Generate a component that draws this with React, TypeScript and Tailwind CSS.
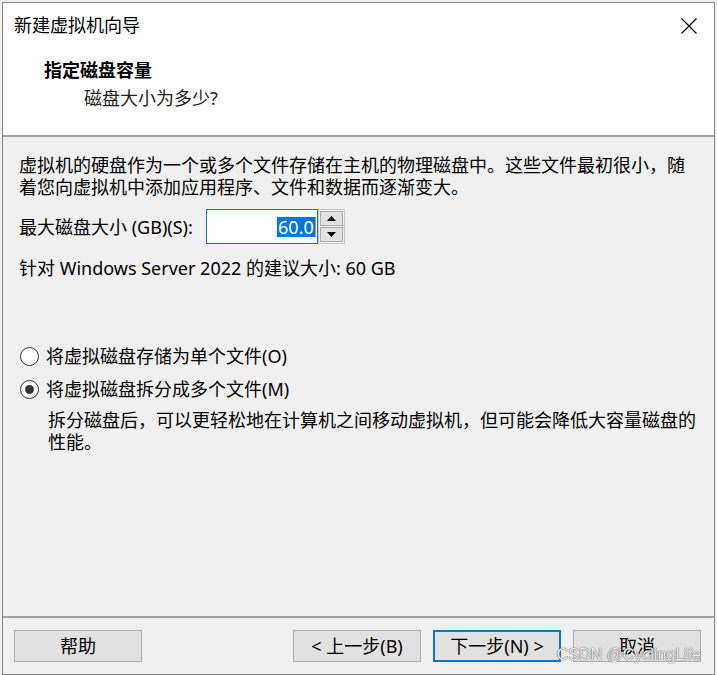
import React from 'react';

const ui = "font-['Noto_Sans','Noto_Sans_CJK_SC',sans-serif]";

function WizardButton({ label, primary }: { label: string; primary?: boolean }) {
    return (
        <button
            className={
                'w-[128px] h-[32px] bg-[#e1e1e1] text-[18px] leading-none text-black flex items-center justify-center ' +
                (primary ? 'border-2 border-[#0078d7]' : 'border border-[#adadad]')
            }
        >
            {label}
        </button>
    );
}

function Radio({ checked, label }: { checked?: boolean; label: string }) {
    return (
        <div className="flex items-center h-[22px]">
            <span className="w-[19px] h-[19px] rounded-full border border-[#333333] bg-white flex items-center justify-center ml-[17px]">
                {checked && <span className="w-[9px] h-[9px] rounded-full bg-[#333333]" />}
            </span>
            <span className="ml-[7px]">{label}</span>
        </div>
    );
}

export default function App() {
    return (
        <div className={`w-[717px] h-[675px] bg-[#f0f0f0] pt-[2px] pl-[2px] overflow-hidden ${ui} text-[18px] leading-[22px] text-black`}>
            <div className="relative w-[713px] h-[673px] border border-[#858585] flex flex-col">
                {/* Title + header */}
                <div className="bg-white h-[132px]">
                    <div className="h-[44px] flex items-center justify-between pl-[11px] pr-[17px]">
                        <span>新建虚拟机向导</span>
                        <svg width="16" height="16" viewBox="0 0 16 16" className="mt-[1px]">
                            <path d="M0.5 0.5 L15.5 15.5 M15.5 0.5 L0.5 15.5" stroke="#000" strokeWidth="1.1" fill="none" />
                        </svg>
                    </div>
                    <div className="mt-[12px] pl-[41px] font-bold">指定磁盘容量</div>
                    <div className="mt-[6px] pl-[81px] text-[#222]">磁盘大小为多少?</div>
                </div>
                <div className="h-[2px] bg-[#a0a0a0]" />

                {/* Body */}
                <div className="flex-1 pt-[17px] pl-[16px] pr-[12px]">
                    <p>
                        虚拟机的硬盘作为一个或多个文件存储在主机的物理磁盘中。这些文件最初很小，随
                        <br />
                        着您向虚拟机中添加应用程序、文件和数据而逐渐变大。
                    </p>

                    <div className="mt-[11px] flex items-center">
                        <span>最大磁盘大小 (GB)(S):</span>
                        <div className="ml-[13px] flex h-[35px]">
                            <div className="w-[112px] h-full bg-white border border-[#0078d7] flex items-center justify-end pr-[1px]">
                                <span className="bg-[#0078d7] text-white h-[20px] leading-[20px] px-[1px]">60.0</span>
                                <span className="w-[1px] h-[20px] bg-[#e58a2a]" />
                            </div>
                            <div className="w-[27px] h-full border border-[#c8c8c8] flex flex-col gap-[1px] p-[1px] bg-[#f0f0f0]">
                                <div className="flex-1 bg-[#e1e1e1] border border-[#adadad] flex items-center justify-center">
                                    <svg width="9" height="5" viewBox="0 0 9 5"><path d="M4.5 0 L9 5 L0 5 Z" fill="#000" /></svg>
                                </div>
                                <div className="flex-1 bg-[#e1e1e1] border border-[#adadad] flex items-center justify-center">
                                    <svg width="9" height="5" viewBox="0 0 9 5"><path d="M0 0 L9 0 L4.5 5 Z" fill="#000" /></svg>
                                </div>
                            </div>
                        </div>
                    </div>

                    <p className="mt-[13px]">针对 Windows Server 2022 的建议大小: 60 GB</p>

                    <div className="mt-[66px] -ml-[16px] flex flex-col gap-[11px]">
                        <Radio label="将虚拟磁盘存储为单个文件(O)" />
                        <Radio checked label="将虚拟磁盘拆分成多个文件(M)" />
                    </div>
                    <p className="mt-[9px] pl-[29px]">
                        拆分磁盘后，可以更轻松地在计算机之间移动虚拟机，但可能会降低大容量磁盘的
                        <br />
                        性能。
                    </p>
                </div>

                {/* Footer */}
                <div className="h-[2px] bg-[#a0a0a0]" />
                <div className="h-[56px] pt-[12px] pl-[11px] pr-[13px] flex items-start">
                    <WizardButton label="帮助" />
                    <div className="ml-auto flex gap-[12px]">
                        <WizardButton label="< 上一步(B)" />
                        <WizardButton label="下一步(N) >" primary />
                        <WizardButton label="取消" />
                    </div>
                </div>

                <span className="absolute right-[13px] bottom-[11px] font-['Liberation_Sans',sans-serif] text-[16px] leading-none text-[#ececec] [text-shadow:0_0_1px_#5a5a5a,0_0_1px_#5a5a5a]">
                    CSDN @CyclingLife
                </span>
            </div>
        </div>
    );
}
